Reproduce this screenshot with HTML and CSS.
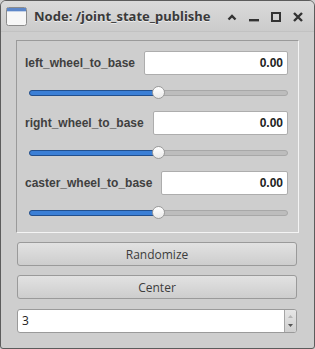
FILE: index.html
```html
<!DOCTYPE html>
<html>
<head>
  <title>Node: /joint_state_publisher</title>
  <link rel="stylesheet" href="styles.css">
</head>
<body>

<div class="window">
  <div class="titlebar">
    <svg class="app-icon" width="21" height="19" viewBox="0 0 21 19">
      <rect x="0.5" y="0.5" width="20" height="18" rx="2" fill="#f7f7f7" stroke="#8c8c8c"/>
      <rect x="1" y="1" width="19" height="3" fill="#5d87c9"/>
      <rect x="1" y="4" width="19" height="1" fill="#c4d2e8"/>
    </svg>
    <span class="title">Node: /joint_state_publishe</span>
    <div class="controls">
      <svg width="10" height="8" viewBox="0 0 10 8"><path d="M1.5 6.5 L5 3 L8.5 6.5" fill="none" stroke="#333" stroke-width="2.4"/></svg>
      <svg width="10" height="10" viewBox="0 0 10 10"><rect x="0" y="7" width="10" height="2.4" fill="#333"/></svg>
      <svg width="10" height="10" viewBox="0 0 10 10"><rect x="1" y="1" width="8" height="8" fill="none" stroke="#333" stroke-width="2"/></svg>
      <svg width="10" height="10" viewBox="0 0 10 10"><path d="M1 1 L9 9 M9 1 L1 9" stroke="#333" stroke-width="2.4"/></svg>
    </div>
  </div>

  <div class="content">
    <div class="joints">
      <div class="joint">
        <div class="joint-row">
          <span class="joint-name">left_wheel_to_base</span>
          <div class="value">0.00</div>
        </div>
        <div class="slider"><div class="track"><div class="fill"></div><div class="handle"></div></div></div>
      </div>
      <div class="joint">
        <div class="joint-row">
          <span class="joint-name">right_wheel_to_base</span>
          <div class="value">0.00</div>
        </div>
        <div class="slider"><div class="track"><div class="fill"></div><div class="handle"></div></div></div>
      </div>
      <div class="joint">
        <div class="joint-row">
          <span class="joint-name">caster_wheel_to_base</span>
          <div class="value">0.00</div>
        </div>
        <div class="slider"><div class="track"><div class="fill"></div><div class="handle"></div></div></div>
      </div>
    </div>

    <button class="btn">Randomize</button>
    <button class="btn">Center</button>

    <div class="spinbox">
      <span class="spin-value">3</span>
      <div class="spin-arrows">
        <svg width="5" height="3" viewBox="0 0 5 3"><path d="M0 3 L2.5 0 L5 3 Z" fill="#b5b5b5"/></svg>
        <svg width="5" height="3" viewBox="0 0 5 3"><path d="M0 0 L2.5 3 L5 0 Z" fill="#555"/></svg>
      </div>
    </div>
  </div>
</div>

</body>
</html>
```

FILE: styles.css
```css
body {
  margin: 0;
  background-color: #cfcfcf;
  font-family: "Open Sans", "Noto Sans", sans-serif;
}

.window {
  width: 315px;
  height: 349px;
  box-sizing: border-box;
  border: 1px solid #5c5c5c;
  border-radius: 6px 6px 3px 3px;
  background-color: #cecece;
  overflow: hidden;
}

.titlebar {
  height: 30px;
  display: flex;
  align-items: center;
  padding-left: 5px;
  background: linear-gradient(#dadada, #cbcbcb);
  border-bottom: 1px solid #c2c2c2;
}

.app-icon {
  margin-top: 1px;
}

.title {
  margin-left: 7px;
  font-family: "Noto Sans", sans-serif;
  font-weight: bold;
  font-size: 13px;
  color: #3a3a3a;
  text-shadow: 0 1px 0 #ececec;
  white-space: nowrap;
}

.controls {
  margin-left: auto;
  display: flex;
  align-items: center;
  gap: 12px;
  padding-right: 11px;
  margin-top: 1px;
}

.content {
  padding: 8px 15px 0 15px;
}

.joints {
  border: 1px solid #f4f4f4;
  border-top-color: #9a9a9a;
  border-left-color: #9a9a9a;
  padding: 10px 10px 1px 8px;
}

.joint-row {
  display: flex;
  align-items: center;
  gap: 9px;
  height: 24px;
}

.joint-name {
  font-family: "Liberation Sans", sans-serif;
  font-weight: bold;
  font-size: 12px;
  color: #404040;
  white-space: nowrap;
}

.value {
  flex: 1;
  height: 24px;
  box-sizing: border-box;
  border: 1px solid #adadad;
  border-radius: 2px;
  background-color: #fff;
  text-align: right;
  padding-right: 4px;
  font-family: "Liberation Sans", sans-serif;
  font-weight: bold;
  font-size: 12px;
  line-height: 22px;
  color: #222;
}

.slider {
  height: 36px;
  display: flex;
  align-items: center;
  padding-left: 4px;
}

.track {
  position: relative;
  flex: 1;
  height: 4px;
  border: 1px solid #a8a8a8;
  border-radius: 3px;
  background-color: #bdbdbd;
}

.fill {
  width: 50%;
  height: 100%;
  margin: -1px 0 0 -1px;
  border: 1px solid #23508e;
  border-radius: 3px;
  background-color: #3b7fd6;
}

.handle {
  position: absolute;
  left: 50%;
  top: 50%;
  width: 13px;
  height: 13px;
  margin: -7px 0 0 -7px;
  box-sizing: border-box;
  border: 1px solid #9a9a9a;
  border-radius: 50%;
  background: linear-gradient(#ffffff, #e9e9e9);
}

.btn {
  display: block;
  width: 280px;
  height: 24px;
  margin: 9px 0 0 1px;
  border: 1px solid #9a9a9a;
  border-radius: 3px;
  background: linear-gradient(#e2e2e2, #cdcdcd);
  font-family: "Open Sans", sans-serif;
  font-size: 12px;
  color: #3c3c3c;
  padding: 0;
}

.spinbox {
  display: flex;
  width: 280px;
  height: 24px;
  margin: 10px 0 0 1px;
  box-sizing: border-box;
  border: 1px solid #9a9a9a;
  border-radius: 3px;
  background-color: #fff;
  overflow: hidden;
}

.spin-value {
  flex: 1;
  padding-left: 4px;
  font-family: "Open Sans", sans-serif;
  font-size: 12px;
  line-height: 22px;
  color: #222;
}

.spin-arrows {
  width: 11px;
  border-left: 1px solid #a5a5a5;
  background: linear-gradient(#e6e6e6, #cfcfcf);
  display: flex;
  flex-direction: column;
  align-items: center;
  justify-content: space-between;
  padding: 5px 0 5px;
}
```
